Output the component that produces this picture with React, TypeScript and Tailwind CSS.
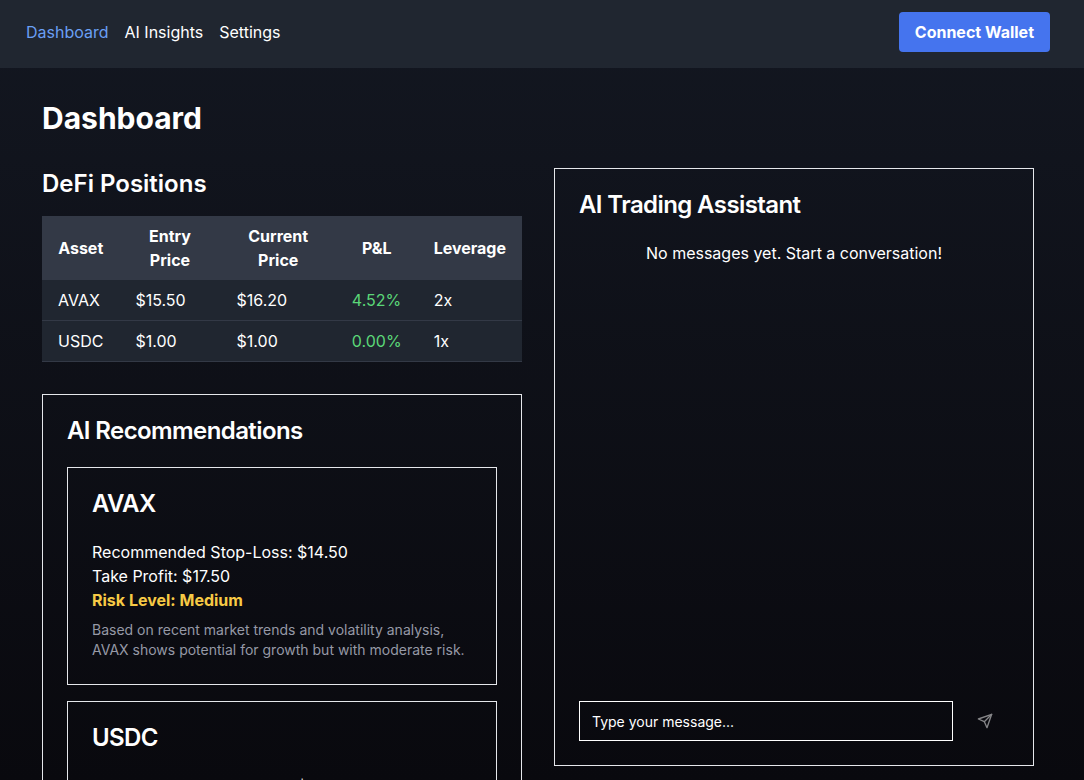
const positions = [
  { asset: "AVAX", entry: "$15.50", current: "$16.20", pnl: "4.52%", leverage: "2x" },
  { asset: "USDC", entry: "$1.00", current: "$1.00", pnl: "0.00%", leverage: "1x" },
];

const recommendations = [
  {
    asset: "AVAX",
    stopLoss: "$14.50",
    takeProfit: "$17.50",
    risk: "Medium",
    riskClass: "text-[#f7ca45]",
    note: "Based on recent market trends and volatility analysis, AVAX shows potential for growth but with moderate risk.",
  },
  {
    asset: "USDC",
    stopLoss: "$0.99",
    takeProfit: "$1.01",
    risk: "Low",
    riskClass: "text-[#5bd778]",
    note: "USDC is a stablecoin with minimal price fluctuation. Suitable for low-risk strategies.",
  },
];

function SendIcon() {
  return (
    <svg
      className="size-4"
      viewBox="0 0 24 24"
      fill="none"
      stroke="currentColor"
      strokeWidth="2"
      strokeLinecap="round"
      strokeLinejoin="round"
    >
      <path d="m22 2-7 20-4-9-9-4Z" />
      <path d="M22 2 11 13" />
    </svg>
  );
}

function Header() {
  return (
    <header className="h-[68px] bg-[#202630] pl-[26px] pr-[34px] pt-3">
      <div className="flex h-10 items-center justify-between">
        <nav className="flex gap-4">
          <a className="text-[#6a9ff4]">Dashboard</a>
          <a>AI Insights</a>
          <a>Settings</a>
        </nav>
        <button className="h-10 rounded bg-[#4574ee] px-4 font-bold">Connect Wallet</button>
      </div>
    </header>
  );
}

function PositionsTable() {
  return (
    <section>
      <h2 className="mb-4 text-2xl font-semibold">DeFi Positions</h2>
      <table className="w-full bg-[#202630]">
        <thead>
          <tr className="bg-[#333946]">
            <th className="px-4 py-2">Asset</th>
            <th className="px-4 py-2">Entry Price</th>
            <th className="px-4 py-2">Current Price</th>
            <th className="px-4 py-2">P&amp;L</th>
            <th className="px-4 py-2">Leverage</th>
          </tr>
        </thead>
        <tbody>
          {positions.map((p) => (
            <tr key={p.asset} className="border-b border-[#333946]">
              <td className="px-4 py-2">{p.asset}</td>
              <td className="px-4 py-2">{p.entry}</td>
              <td className="px-4 py-2">{p.current}</td>
              <td className="px-4 py-2 text-[#5bd778]">{p.pnl}</td>
              <td className="px-4 py-2">{p.leverage}</td>
            </tr>
          ))}
        </tbody>
      </table>
    </section>
  );
}

function Recommendations() {
  return (
    <section className="border border-[#e5e7eb] p-6">
      <h2 className="mb-6 text-2xl leading-6 font-semibold tracking-tight">AI Recommendations</h2>
      <div className="flex flex-col gap-4">
        {recommendations.map((r) => (
          <article key={r.asset} className="border border-[#e5e7eb] p-6">
            <h3 className="mb-6 text-2xl leading-6 font-semibold tracking-tight">{r.asset}</h3>
            <p>Recommended Stop-Loss: {r.stopLoss}</p>
            <p>Take Profit: {r.takeProfit}</p>
            <p className={`font-bold ${r.riskClass}`}>Risk Level: {r.risk}</p>
            <p className="mt-2 text-sm text-[#9699a6]">{r.note}</p>
          </article>
        ))}
      </div>
    </section>
  );
}

function Assistant() {
  return (
    <section className="flex h-[598px] flex-col border border-[#e5e7eb] p-6">
      <h2 className="mb-6 text-2xl leading-6 font-semibold tracking-tight">AI Trading Assistant</h2>
      <div className="grow text-center">No messages yet. Start a conversation!</div>
      <form className="flex items-center gap-2">
        <input
          className="h-10 w-[374px] border border-white bg-transparent px-3 text-sm placeholder:text-white"
          placeholder="Type your message..."
        />
        <button type="button" className="flex h-10 w-12 items-center justify-center opacity-50">
          <SendIcon />
        </button>
      </form>
    </section>
  );
}

export default function App() {
  return (
    <div className="h-screen overflow-hidden bg-linear-to-b from-[#131721] to-[#09090e] font-[Inter,sans-serif] text-base text-white">
      <Header />
      <main className="pl-[42px] pr-[50px] pt-8">
        <h1 className="mb-8 text-3xl font-bold">Dashboard</h1>
        <div className="grid grid-cols-2 gap-8">
          <div className="flex flex-col gap-8">
            <PositionsTable />
            <Recommendations />
          </div>
          <Assistant />
        </div>
      </main>
    </div>
  );
}
